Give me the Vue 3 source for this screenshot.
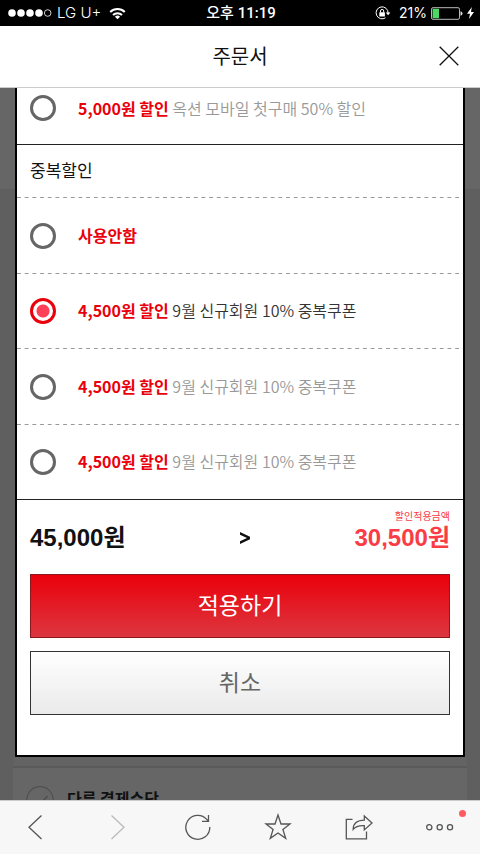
<script setup>
import { ref } from 'vue'

const firstCoupon = ref('')
const stacked = ref('b')

const coupons = [
  { id: 'a', amount: '사용안함', text: '' },
  { id: 'b', amount: '4,500원 할인', text: '9월 신규회원 10% 중복쿠폰' },
  { id: 'c', amount: '4,500원 할인', text: '9월 신규회원 10% 중복쿠폰' },
  { id: 'd', amount: '4,500원 할인', text: '9월 신규회원 10% 중복쿠폰' }
]
</script>

<template>
  <div class="screen">
    <div class="status">
      <div class="carrier">
        <svg class="signal" width="44" height="10" viewBox="0 0 44 10" aria-hidden="true">
          <g fill="#fff">
            <circle cx="4" cy="5" r="3.8" /><circle cx="13" cy="5" r="3.8" />
            <circle cx="22" cy="5" r="3.8" /><circle cx="31" cy="5" r="3.8" />
          </g>
          <circle cx="39.7" cy="5" r="3.3" fill="none" stroke="#fff" stroke-width="0.8" />
        </svg>
        <span>LG U+</span>
        <svg width="17" height="13" viewBox="0 0 17 13" aria-hidden="true">
          <g fill="none" stroke="#fff" stroke-width="2">
            <path d="M1.2 5A10.3 10.3 0 0 1 15.8 5" />
            <path d="M4 8A6.4 6.4 0 0 1 13 8" />
          </g>
          <path d="M8.500 12.300L5.900 9.700A3.700 3.700 0 0 1 11.100 9.700Z" fill="#fff" />
        </svg>
      </div>
      <div class="clock">오후 11:19</div>
      <div class="power">
        <svg class="lock" width="16" height="14" viewBox="0 0 16 14" aria-hidden="true">
          <path d="M13.100 7A6 6 0 1 0 10.500 11.800" fill="none" stroke="#fff" stroke-width="1" />
          <path d="M10.800 6.500H15.400L13.100 9.300Z" fill="#fff" />
          <rect x="4.300" y="6.200" width="5.600" height="4.200" rx="0.500" fill="#fff" />
          <path d="M5.500 6.500V5A1.600 1.600 0 0 1 8.700 5V6.500" fill="none" stroke="#fff" stroke-width="1" />
        </svg>
        <span>21%</span>
        <svg width="32" height="13" viewBox="0 0 32 13" aria-hidden="true">
          <rect x="0.500" y="0.700" width="28" height="11.600" rx="1.500" fill="none" stroke="#bbb" stroke-width="1" />
          <rect x="1.600" y="1.800" width="6.400" height="9.400" fill="#4cd964" />
          <path d="M29.500 4.300Q31.500 4.600 31.500 6.500T29.500 8.700Z" fill="#ddd" />
        </svg>
        <svg width="7" height="12" viewBox="0 0 7 12" aria-hidden="true">
          <path d="M4.800 0L0 6.700H3L2 12L7 5H4Z" fill="#fff" />
        </svg>
      </div>
    </div>

    <header class="header">
      <h1>주문서</h1>
      <button class="close" type="button" aria-label="닫기">
        <svg width="20" height="20" viewBox="0 0 20 20" aria-hidden="true">
          <path d="M0.700 0.700L19.300 19.300M19.300 0.700L0.700 19.300" stroke="#111" stroke-width="1.300" />
        </svg>
      </button>
    </header>

    <main class="body">
      <div class="behind" aria-hidden="true">
        <div class="upper"></div>
        <div class="middle"></div>
        <div class="payment">
          <svg width="28" height="28" viewBox="0 0 28 28">
            <g fill="none" stroke="#505050" stroke-width="1.200">
              <circle cx="14" cy="14" r="13.300" />
              <path d="M8 15L12.500 20L21.500 10" stroke-width="1.600" />
            </g>
          </svg>
          <span>다른 결제수단</span>
        </div>
      </div>

      <form class="modal" @submit.prevent>
        <label class="option first">
          <input v-model="firstCoupon" type="radio" name="first" value="first" />
          <span><b>5,000원 할인</b> <span class="desc">옥션 모바일 첫구매 50% 할인</span></span>
        </label>

        <h2>중복할인</h2>
        <div class="options">
          <label v-for="c in coupons" :key="c.id" class="option dashed" :class="{ on: stacked === c.id }">
            <input v-model="stacked" type="radio" name="stacked" :value="c.id" />
            <span><b>{{ c.amount }}</b> <span class="desc">{{ c.text }}</span></span>
          </label>
        </div>

        <div class="total">
          <strong>45,000원</strong>
          <svg width="20" height="12" viewBox="0 0 20 12" aria-hidden="true">
            <path d="M10 0L20 4.700V7.300L10 12V9.200L17 6L10 2.800Z" fill="#111" />
          </svg>
          <div class="result">
            <small>할인적용금액</small>
            <strong>30,500원</strong>
          </div>
        </div>

        <div class="actions">
          <button class="apply" type="submit">적용하기</button>
          <button class="cancel" type="button">취소</button>
        </div>
      </form>
    </main>

    <nav class="toolbar">
      <button type="button" aria-label="뒤로">
        <svg width="28" height="28" viewBox="0 0 28 28"><path d="M19.500 2.500L7 14.200L19.500 26" /></svg>
      </button>
      <button type="button" class="off" aria-label="앞으로">
        <svg width="28" height="28" viewBox="0 0 28 28"><path d="M8.500 2.500L21 14.200L8.500 26" /></svg>
      </button>
      <button type="button" aria-label="새로고침">
        <svg width="28" height="28" viewBox="0 0 28 28">
          <path d="M25.800 14A12 12 0 1 1 22.800 6.400L24.500 8.300M24.500 2V8.300H18" />
        </svg>
      </button>
      <button type="button" aria-label="즐겨찾기">
        <svg width="28" height="28" viewBox="0 0 28 28">
          <path d="M14 2L17 11H26L18.900 16.500L21.700 25.300L14 20L6.300 25.300L9.100 16.500L2 11H11Z" />
        </svg>
      </button>
      <button type="button" aria-label="공유">
        <svg width="28" height="28" viewBox="0 0 28 28">
          <path d="M7.500 6.300H1.300V25.800H21.500V18.500" />
          <path d="M8.200 16.400C8.200 10.500 12 7.200 19.300 7.200V3L27 10L19.300 16.900V12.600C14 12.300 10.800 13 8.200 16.400Z" />
        </svg>
      </button>
      <button type="button" class="more" aria-label="더보기">
        <svg width="28" height="28" viewBox="0 0 28 28">
          <circle cx="3.300" cy="14.200" r="2.600" /><circle cx="13.700" cy="14.200" r="2.600" /><circle cx="24" cy="14.200" r="2.600" />
        </svg>
        <i class="badge"></i>
      </button>
    </nav>
  </div>
</template>

<style>
body {
  margin: 0;
}
</style>

<style scoped>
.screen {
  display: flex;
  flex-direction: column;
  height: 100vh;
  overflow: hidden;
  color: #111;
  font-family: "Noto Sans CJK KR", sans-serif;
  font-size: 16px;
  line-height: 24px;
}
.screen * {
  box-sizing: border-box;
}
button {
  margin: 0;
  padding: 0;
  border: 0;
  background: none;
  color: inherit;
  font: inherit;
}
svg {
  display: block;
  flex: none;
}
.status {
  display: grid;
  grid-template-columns: 1fr auto 1fr;
  align-items: center;
  flex: none;
  height: 26px;
  padding: 0 6px 0 8px;
  background: #000;
  color: #fff;
  font-family: Inter, "Noto Sans CJK KR", sans-serif;
  font-size: 15px;
}
.carrier,
.power {
  display: flex;
  align-items: center;
}
.carrier {
  gap: 5px;
  font-weight: 300;
}
.carrier span {
  margin-right: 3px;
}
.clock {
  font-family: Roboto, "Noto Sans CJK KR", sans-serif;
  font-weight: 500;
}
.power {
  justify-content: flex-end;
  gap: 4px;
  font-size: 14px;
}
.lock {
  margin-right: 4px;
}
.header {
  display: grid;
  grid-template-columns: 1fr auto 1fr;
  align-items: center;
  flex: none;
  height: 62px;
  padding: 0 21px 2px;
  border-bottom: 1px solid #ccc;
  background: #fff;
}
h1 {
  grid-column: 2;
  margin: 0;
  font-size: 20px;
  font-weight: 400;
  line-height: 28px;
}
.close {
  justify-self: end;
}
.body {
  position: relative;
  flex: 1;
  min-height: 0;
  overflow: hidden;
  background: #5f5f5f;
}
.behind {
  position: absolute;
  inset: 0;
  display: flex;
  flex-direction: column;
}
.upper {
  height: 101px;
  background: #666;
}
.middle {
  flex: 1;
  margin: 0 13px;
  border-bottom: 2px solid #5a5a5a;
  background: linear-gradient(#636363, #636363) bottom / 100% 10px no-repeat;
}
.payment {
  display: flex;
  gap: 13px;
  height: 32px;
  margin: 0 13px;
  padding: 18px 13px 0;
  background: #666;
  color: #111;
  font-weight: 700;
}
.modal {
  position: relative;
  margin: -18px 15px 0;
  padding-bottom: 40px;
  border: 2px solid #000;
  background: #fff;
}
.option {
  display: flex;
  align-items: center;
  gap: 22px;
  padding: 0 13px;
}
.option.first {
  height: 73px;
  border-bottom: 1px solid #222;
}
.option input {
  appearance: none;
  flex: none;
  width: 26px;
  height: 26px;
  margin: 0;
  border: 3px solid #666;
  border-radius: 50%;
  background: #fff;
}
.options input {
  margin-top: 2px;
}
.option input:checked {
  border-color: #ea000b;
  background: radial-gradient(circle, #ff4056 6px, #fff 7px);
}
.option b {
  color: #ea000b;
}
.desc {
  color: #999;
  font-weight: 350;
}
.on .desc {
  color: #333;
}
h2 {
  margin: 0;
  padding: 13px 13px 15px;
  font-size: 17px;
  font-weight: 400;
  line-height: 24px;
}
.options {
  display: grid;
  grid-template-rows: repeat(4, 1fr);
  height: 303px;
  border-bottom: 1px solid #222;
}
.dashed {
  background: linear-gradient(90deg, #999 4px, transparent 4px) top left / calc(100% / 58) 1px repeat-x;
}
.total {
  display: grid;
  grid-template-columns: 1fr auto 1fr;
  align-items: end;
  padding: 8px 13px 22px;
}
.total strong {
  font-family: "Liberation Sans", "Noto Sans CJK KR", sans-serif;
  font-size: 24px;
  line-height: 28px;
}
.total svg {
  margin-bottom: 8px;
}
.result {
  display: flex;
  flex-direction: column;
  align-items: flex-end;
  color: #fa3c46;
}
.result small {
  font-size: 10px;
  line-height: 16px;
}
.actions {
  display: grid;
  gap: 13px;
  padding: 0 13px;
}
.actions button {
  height: 64px;
  padding-bottom: 4px;
  border: 1px solid #333;
  font-size: 23px;
  line-height: 32px;
}
.actions .apply {
  border-color: #8b1a20;
  background: linear-gradient(#ea000b, #dc3740);
  color: #fff;
}
.actions .cancel {
  background: linear-gradient(#fff, #eaeaea);
  color: #666;
}
.toolbar {
  display: flex;
  align-items: center;
  justify-content: space-between;
  flex: none;
  height: 54px;
  padding: 0 26px 2px 22px;
  border-top: 1px solid #ccc;
  background: #f7f7f7;
}
.toolbar svg {
  fill: none;
  stroke: #555;
  stroke-width: 1.3px;
}
.toolbar .off svg {
  stroke: #bbb;
}
.more {
  position: relative;
}
.badge {
  position: absolute;
  top: -3px;
  right: -12px;
  width: 7px;
  height: 7px;
  border-radius: 50%;
  background: #ff5a5f;
}
</style>
